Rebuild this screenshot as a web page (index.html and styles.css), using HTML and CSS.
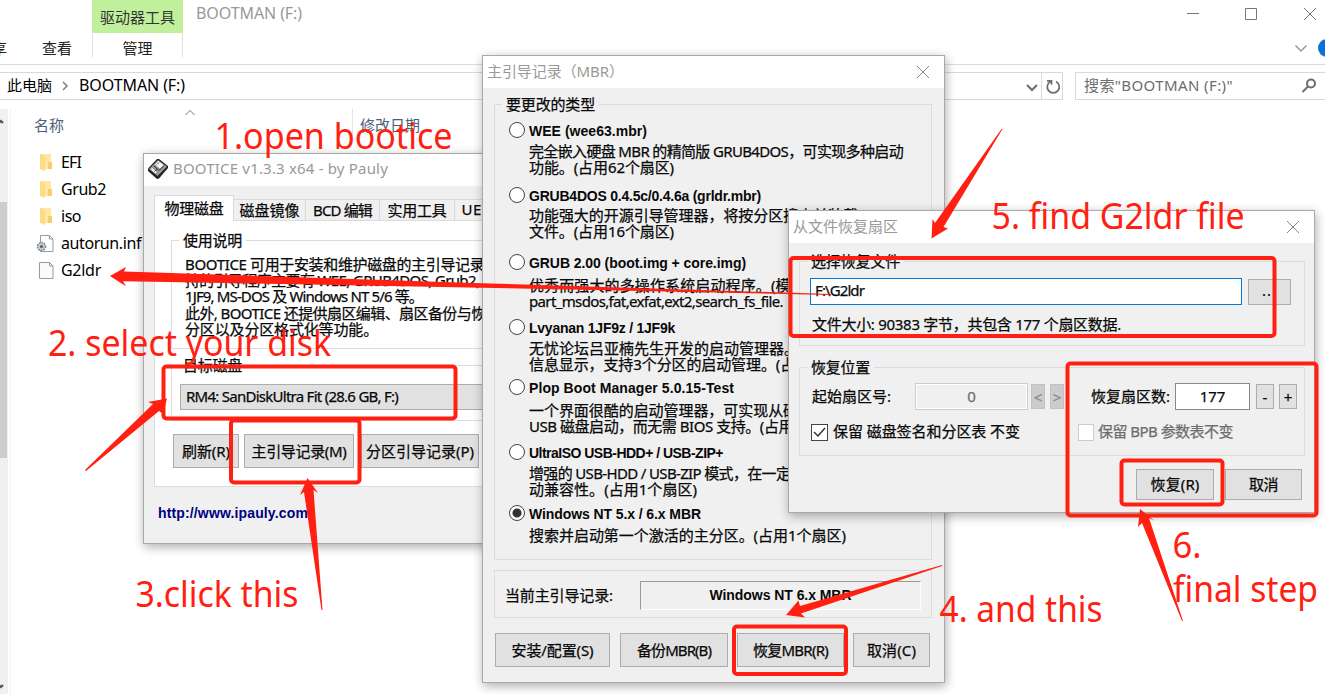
FILE: index.html
```
<!DOCTYPE html>
<html lang="zh-CN">
<head>
<meta charset="utf-8">
<title>BOOTMAN (F:)</title>
<link rel="stylesheet" href="styles.css">
</head>
<body>
<main class="desktop">
  <section class="explorer">
    <header class="ex-title">
      <span class="ex-tool"><span data-w="75">驱动器工具</span></span>
      <span class="ex-name"><span data-w="106">BOOTMAN (F:)</span></span>
      <svg class="ex-controls" width="140" height="28" viewBox="1185 0 140 28"><path d="M1187 13.500h12M1245.500 8.500h11v11h-11zM1304 8l12 12M1316 8l-12 12"/></svg>
    </header>
    <nav class="ex-ribbon">
      <span class="rb-share">享</span>
      <span class="rb-view">查看</span>
      <span class="rb-manage">管理</span>
      <svg class="rb-right" width="35" height="30" viewBox="1290 33 35 30"><path class="chev" d="M1295.500 45.500l5.500 5.500 5.500-5.500"/><circle cx="1327" cy="48" r="9" fill="#0873d2"/></svg>
    </nav>
    <div class="ex-bar">
      <div class="path">
        <span data-w="45">此电脑</span>
        <svg class="path-sep" width="8" height="10" viewBox="0 0 8 10"><path d="M2 1l4 4-4 4"/></svg>
        <span class="lat" data-w="106">BOOTMAN (F:)</span>
        <svg class="path-ctl" width="36" height="26" viewBox="1026 73 36 26"><path d="M1027 85l5 5 5-5" stroke-width="2"/><path d="M1041.500 72v28" stroke="#d9d9d9" stroke-width="1"/><path d="M1050.500 81.500a6 6 0 1 0 5.500 0M1047 80.800h4.500v4" stroke-width="1.700"/></svg>
      </div>
      <div class="search">
        <span data-w="149">搜索"BOOTMAN (F:)"</span>
        <svg width="16" height="16" viewBox="0 0 16 16"><circle cx="10" cy="5.500" r="4"/><path d="M7 8.500L1.500 14"/></svg>
      </div>
    </div>
    <div class="ex-main">
      <div class="scroll"><svg width="8" height="16" viewBox="0 0 8 16"><path d="M-2 15l3-3 2 2"/></svg><i></i><svg class="down" width="8" height="16" viewBox="0 0 8 16"><path d="M-2 6l3 3 2-2"/></svg></div>
      <div class="list">
        <div class="cols"><span class="c-name">名称</span><svg class="sort" width="12" height="8" viewBox="0 0 12 8"><path d="M1.500 6l4.500-4.500 4.500 4.500"/></svg><span class="c-date">修改日期</span></div>
        <div class="file"><svg width="20" height="20" viewBox="0 0 20 20"><path fill="#ffe7a2" d="M4 1h11v15H4z"/><path fill="#f6d06e" d="M12 9h4v7h-4z"/><path fill="#fbdc84" d="M4 1l5 3v14l-5-2z"/></svg><span data-w="20">EFI</span></div>
        <div class="file"><svg width="20" height="20" viewBox="0 0 20 20"><path fill="#ffe7a2" d="M4 1h11v15H4z"/><path fill="#f6d06e" d="M12 9h4v7h-4z"/><path fill="#fbdc84" d="M4 1l5 3v14l-5-2z"/></svg><span data-w="45">Grub2</span></div>
        <div class="file"><svg width="20" height="20" viewBox="0 0 20 20"><path fill="#ffe7a2" d="M4 1h11v15H4z"/><path fill="#f6d06e" d="M12 9h4v7h-4z"/><path fill="#fbdc84" d="M4 1l5 3v14l-5-2z"/></svg><span data-w="20">iso</span></div>
        <div class="file"><svg width="20" height="20" viewBox="0 0 20 20"><path fill="#fff" stroke="#9a9a9a" d="M4.500 1.500h9l3.500 3.500v12.500H4.500z"/><path fill="none" stroke="#9a9a9a" d="M13.500 1.500v3.500h3.500"/><circle cx="5.500" cy="12.500" r="4" fill="#c4ccd2" stroke="#7d8991" stroke-width="1.600" stroke-dasharray="1.600 1"/><circle cx="5.500" cy="12.500" r="1.500" fill="#4f5a61"/></svg><span data-w="80">autorun.inf</span></div>
        <div class="file"><svg width="20" height="20" viewBox="0 0 20 20"><path fill="#fafafa" stroke="#9a9a9a" d="M3.500 1.500h10l3.500 3.500v12.500H3.500z"/><path fill="none" stroke="#9a9a9a" d="M13.500 1.500v3.500h3.500"/></svg><span data-w="40">G2ldr</span></div>
      </div>
    </div>
  </section>

  <section class="window bootice">
    <header class="titlebar">
      <svg class="app" width="20" height="20" viewBox="0 0 20 20"><path fill="#222" d="M9 0L0 9.500v2.500L9 20l2-.5L20 9V7L11 0z"/><path fill="#999" d="M10 1L1 10l8.500 7L19 7.500z"/><path fill="#fff" d="M10.500 2L7 5.500l5 4L15.500 6zM4 9l4.500 4-1 1.500L3 10.500z"/><path stroke="#333" fill="none" d="M11 3.500L9 5.500M6 7l5 4.500 5-5M6.500 12.500l2.500-2.500"/></svg>
      <span data-w="215">BOOTICE v1.3.3 x64 - by Pauly</span>
    </header>
    <div class="bt-body">
      <div class="tabs"><span class="tab on"><span data-w="59">物理磁盘</span></span><span class="tab t2"><span data-w="60">磁盘镜像</span></span><span class="tab t3"><span data-w="59">BCD 编辑</span></span><span class="tab t4"><span data-w="59">实用工具</span></span><span class="tab t5"><span data-w="34">UEFI</span></span></div>
      <div class="page">
        <div class="group g-info">
          <div class="legend"><span data-w="59">使用说明</span></div>
          <p><span data-w="314">BOOTICE 可用于安装和维护磁盘的主引导记录、</span></p>
          <p><span data-w="313">持的引导程序主要有 WEE, GRUB4DOS, Grub2, SY</span></p>
          <p><span data-w="238">1JF9, MS-DOS 及 Windows NT 5/6 等。</span></p>
          <p><span data-w="315">此外, BOOTICE 还提供扇区编辑、扇区备份与恢复</span></p>
          <p><span data-w="193">分区以及分区格式化等功能。</span></p>
        </div>
        <div class="group g-disk">
          <div class="legend"><span data-w="59">目标磁盘</span></div>
          <div class="select"><span data-w="212">RM4: SanDiskUltra Fit (28.6 GB, F:)</span></div>
        </div>
        <div class="bt-buttons"><span class="btn b1"><span data-w="48">刷新(R)</span></span><span class="btn b2"><span data-w="95">主引导记录(M)</span></span><span class="btn b3"><span data-w="108">分区引导记录(P)</span></span></div>
      </div>
      <div class="url"><b data-w="150">http://www.ipauly.com</b></div>
    </div>
  </section>

  <section class="window mbr">
    <header class="titlebar"><span data-w="137">主引导记录（MBR）</span><svg width="14" height="14" viewBox="0 0 14 14"><path d="M1 1l12 12M13 1L1 13"/></svg></header>
    <div class="mbr-body">
      <div class="group types">
        <div class="legend"><span data-w="89">要更改的类型</span></div>
        <div class="options">
          <div class="opt"><i></i><b data-w="118">WEE (wee63.mbr)</b><p><span data-w="374">完全嵌入硬盘 MBR 的精简版 GRUB4DOS，可实现多种启动</span></p><p><span data-w="145">功能。(占用62个扇区)</span></p></div>
          <div class="opt d3"><i></i><b data-w="232">GRUB4DOS 0.4.5c/0.4.6a (grldr.mbr)</b><p><span data-w="329">功能强大的开源引导管理器，将按分区搜索并装载</span></p><p><span data-w="145">文件。(占用16个扇区)</span></p></div>
          <div class="opt d6"><i></i><b data-w="217">GRUB 2.00 (boot.img + core.img)</b><p><span data-w="281">优秀而强大的多操作系统启动程序。(模块:</span></p><p><span data-w="254">part_msdos,fat,exfat,ext2,search_fs_file.</span></p></div>
          <div class="opt"><i></i><b data-w="146">Lvyanan 1JF9z / 1JF9k</b><p><span data-w="270">无忧论坛吕亚楠先生开发的启动管理器。</span></p><p><span data-w="281">信息显示，支持3个分区的启动管理。(占用</span></p></div>
          <div class="opt d6"><i></i><b data-w="205">Plop Boot Manager 5.0.15-Test</b><p><span data-w="284">一个界面很酷的启动管理器，可实现从硬盘</span></p><p><span data-w="264">USB 磁盘启动，而无需 BIOS 支持。(占用</span></p></div>
          <div class="opt"><i></i><b data-w="194">UltraISO USB-HDD+ / USB-ZIP+</b><p><span data-w="290">增强的 USB-HDD / USB-ZIP 模式，在一定程度</span></p><p><span data-w="168">动兼容性。(占用1个扇区)</span></p></div>
          <div class="opt d5 sel"><i></i><b data-w="172">Windows NT 5.x / 6.x MBR</b><p><span data-w="317">搜索并启动第一个激活的主分区。(占用1个扇区)</span></p></div>
        </div>
      </div>
      <div class="current"><span data-w="108">当前主引导记录:</span><div class="sunken"><b data-w="142">Windows NT 6.x MBR</b></div></div>
      <div class="mbr-buttons"><span class="btn m1"><span data-w="82">安装/配置(S)</span></span><span class="btn m2"><span data-w="74">备份MBR(B)</span></span><span class="btn m3"><span data-w="75">恢复MBR(R)</span></span><span class="btn m4"><span data-w="49">取消(C)</span></span></div>
    </div>
  </section>

  <section class="window restore">
    <header class="titlebar"><span data-w="105">从文件恢复扇区</span><svg width="14" height="14" viewBox="0 0 14 14"><path d="M1 1l12 12M13 1L1 13"/></svg></header>
    <div class="rs-body">
      <div class="group rs-file">
        <div class="legend"><span data-w="89">选择恢复文件</span></div>
        <div class="row"><span class="input focus"><span data-w="49">F:\G2ldr</span></span><span class="btn more">...</span></div>
        <p class="size"><span data-w="309">文件大小: 90383 字节，共包含 177 个扇区数据.</span></p>
      </div>
      <div class="group rs-pos">
        <div class="legend"><span data-w="59">恢复位置</span></div>
        <div class="row nums"><span class="lab1"><span data-w="79">起始扇区号:</span></span><span class="input off">0</span><span class="btn step off">&lt;</span><span class="btn step off">&gt;</span><span class="lab2"><span data-w="79">恢复扇区数:</span></span><span class="input count">177</span><span class="btn pm">-</span><span class="btn pm">+</span></div>
        <div class="row checks"><span class="check"><svg width="17" height="17" viewBox="0 0 17 17"><path d="M3 8l4 4 7-8"/></svg></span><span class="ck1"><span data-w="187">保留 磁盘签名和分区表 不变</span></span><span class="check dis"></span><span class="ck2"><span data-w="135">保留 BPB 参数表不变</span></span></div>
      </div>
      <div class="rs-buttons"><span class="btn r1"><span data-w="49">恢复(R)</span></span><span class="btn r2"><span data-w="29">取消</span></span></div>
    </div>
  </section>

  <svg class="notes" width="1325" height="694" viewBox="0 0 1325 694">
    <g class="boxes">
      <rect x="163.500" y="366.500" width="292" height="52" rx="3"/>
      <rect x="231" y="420.500" width="128.500" height="62" rx="3"/>
      <rect x="734" y="626.500" width="112" height="47.500" rx="3"/>
      <rect x="790.500" y="258" width="484" height="78" rx="3"/>
      <rect x="1067.500" y="363.500" width="249" height="152" rx="3"/>
      <rect x="1121.500" y="460.500" width="101" height="44" rx="3"/>
    </g>
    <g class="arrows">
      <path d="M110 276l16-9-2 4.500L482 283.200 831 294v1L482 287.700 123 281.200l3 5z"/>
      <path d="M167 398.500l-19 3.500 5 2L85 470l1 1 73-60 4 3z"/>
      <path d="M307.500 478l-7.500 17 4-3 17.500 118h1L313.500 490l4.500 3z"/>
      <path d="M786 615l12.500-14.500 1.500 5.500L942 565v1L801 613.500l4 4z"/>
      <path d="M931.500 238.500l1-19.500 2.500 4L1001.500 129h1L943.500 227l4.500 1.500z"/>
      <path d="M1140 509l-2 18 4-4 40 98h1l-34-103 5 2.500z"/>
    </g>
    <g class="words">
      <text x="214.500" y="148.500" textLength="238" lengthAdjust="spacingAndGlyphs">1.open bootice</text>
      <text x="48" y="355.500" textLength="283" lengthAdjust="spacingAndGlyphs">2. select your disk</text>
      <text x="135.500" y="606.500" textLength="163" lengthAdjust="spacingAndGlyphs">3.click this</text>
      <text x="939.500" y="621.500" textLength="163" lengthAdjust="spacingAndGlyphs">4. and this</text>
      <text x="991.500" y="228.500" textLength="253" lengthAdjust="spacingAndGlyphs">5. find G2ldr file</text>
      <text x="1172.500" y="558" textLength="29" lengthAdjust="spacingAndGlyphs">6.</text>
      <text x="1173" y="601.500" textLength="145" lengthAdjust="spacingAndGlyphs">final step</text>
    </g>
  </svg>
</main>
<script src="fit.js"></script>
</body>
</html>
```
FILE: styles.css
```
* { box-sizing: border-box; }
body { margin: 0; background: #fff; font-family: "Noto Sans", "Noto Sans CJK SC", sans-serif; font-size: 15px; color: #000; }
p { margin: 0; }
svg { display: block; flex: none; }
[data-w] { display: inline-block; white-space: nowrap; }
span[data-w] { transform: translateY(-1px); }
.desktop { position: relative; width: 1325px; height: 694px; overflow: hidden; }

/* explorer */
.explorer { display: flex; flex-direction: column; height: 694px; }
.ex-title { display: flex; height: 33px; padding-left: 92px; line-height: 28px; }
.ex-tool { width: 91px; height: 33px; padding-left: 8px; background: #c0f09c; color: #333; line-height: 36px; }
.ex-name { margin-left: 13px; color: #999; font-size: 16px; }
.ex-controls { margin-left: auto; fill: none; stroke: #777; }
.ex-ribbon { display: flex; height: 32px; border-bottom: 1px solid #dcdcdc; line-height: 30px; color: #222; }
.rb-share { width: 42px; margin-left: -8px; margin-right: 8px; }
.rb-view { width: 50px; }
.rb-manage { width: 91px; height: 24px; text-align: center; border: solid #e0e0e0; border-width: 0 1px; }
.rb-right { margin-left: auto; }
.chev { fill: none; stroke: #999; stroke-width: 1.5; }
.ex-bar { display: flex; height: 28px; margin-top: 7px; line-height: 26px; }
.path { display: flex; align-items: center; width: 1063px; padding-left: 7px; border: 1px solid #d9d9d9; border-left: 0; }
.lat { font-size: 16px; }
.path-sep { margin: 0 10px 0 9px; fill: none; stroke: #777; stroke-width: 1.4; }
.path-ctl { margin-left: auto; fill: none; stroke: #6d6d6d; }
.search { display: flex; align-items: center; flex: 1; margin-left: 12px; padding: 0 8px; border: 1px solid #d9d9d9; border-right: 0; color: #6d6d6d; justify-content: space-between; }
.search svg { fill: none; stroke: #6d6d6d; stroke-width: 2; }
.ex-main { display: flex; flex: 1; padding-top: 9px; }
.scroll { display: flex; flex-direction: column; width: 8px; background: #f0f0f0; }
.scroll svg { fill: none; stroke: #555; stroke-width: 2; }
.scroll i { width: 7px; height: 256px; margin-top: 77px; background: #cdcdcd; }
.scroll .down { margin-top: auto; }
.list { flex: 1; margin-left: 2px; border-left: 1px solid #f2f2f2; }
.cols { display: flex; height: 40px; padding-left: 23px; line-height: 33px; color: #4c607a; }
.sort { fill: none; stroke: #777; }
.c-name { width: 150px; }
.c-date { height: 34px; margin-left: 156px; padding-left: 7px; border-left: 1px solid #e5e5e5; }
.file { display: flex; align-items: center; height: 27px; padding-left: 25px; font-size: 16px; }
.file span { margin-left: 5px; }

/* windows */
.window { position: absolute; border: 1px solid #a9a9a9; background: #f0f0f0; box-shadow: 1px 3px 10px rgba(0,0,0,.32); color: #080808; -webkit-text-stroke: .25px; }
.titlebar { display: flex; align-items: center; height: 32px; background: #fff; color: #999; padding: 0 14px 0 4px; -webkit-text-stroke: 0; }
.titlebar span { margin-bottom: 2px; }
.titlebar svg:not(.app) { margin-left: auto; fill: none; stroke: #858585; }
.group { border: 1px solid #dcdcdc; }
.legend { width: max-content; height: 16px; margin: -8px 0 0 7px; padding: 0 4px; line-height: 16px; background: #f0f0f0; }
.btn { display: flex; align-items: center; justify-content: center; background: #e1e1e1; border: 1px solid #adadad; }

.bootice { left: 143px; top: 153px; width: 500px; height: 391px; }
.app { margin-right: 5px; margin-bottom: 3px; }
.bt-body { padding: 9px 0 0 10px; }
.tabs { display: flex; align-items: flex-end; height: 25px; }
.tab { display: flex; align-items: center; justify-content: center; height: 21px; border: 1px solid #d9d9d9; border-width: 1px 1px 0 0; }
.tab.on { position: relative; width: 80px; height: 26px; margin-bottom: -1px; background: #fff; border-left-width: 1px; }
.t2 { width: 72px; } .t3 { width: 74px; } .t4 { width: 75px; } .t5 { width: 48px; }
.page { height: 267px; padding: 19px 0 0 16px; background: #fff; border: 1px solid #dcdcdc; }
.page .legend { background: #fff; }
.g-info { height: 109px; }
.g-info p { height: 16.2px; padding-left: 13px; line-height: 16.2px; }
.g-info .legend { margin-bottom: 8px; }
.g-disk { height: 56px; margin-top: 16px; }
.select { display: flex; align-items: center; height: 26px; margin: 10px 8px 0; padding-left: 5px; background: #e1e1e1; border: 1px solid #adadad; }
.bt-buttons { display: flex; height: 34px; margin: 13px 0 0 2px; }
.b1 { width: 66px; } .b2 { width: 110px; margin-left: 5px; } .b3 { width: 118px; margin-left: 7px; }
.url { margin: 17px 0 0 4px; font: bold 14px/18px "Liberation Sans", sans-serif; color: #000080; -webkit-text-stroke: 0; }

.mbr { left: 482px; top: 55px; width: 463px; height: 628px; }
.mbr-body { padding: 16px 12px 0 11px; }
.types { height: 456px; }
.options { display: grid; grid-template-rows: 65px 67px 65px 60px 65px 61px auto; padding: 9px 0 0 14px; }
.opt { display: grid; grid-template-columns: 16px auto; grid-template-rows: 18px; grid-auto-rows: 16.3px; align-content: start; column-gap: 4px; }
.opt i { width: 16px; height: 16px; border: 1.500px solid #444; border-radius: 50%; background: #fff; }
.opt b, .sunken b { font: bold 14px/19px "Liberation Sans", sans-serif; justify-self: start; -webkit-text-stroke: 0; }
.opt p { grid-column: 2; line-height: 16px; white-space: nowrap; transform: translateY(4px); }
.opt.d3 p { transform: translateY(3px); } .opt.d5 p { transform: translateY(5px); } .opt.d6 p { transform: translateY(6px); }
.sel i { background: radial-gradient(circle, #333 4px, #fff 5px); }
.current { display: flex; align-items: center; height: 48px; margin-top: 10px; padding: 2px 10px 0; border: 1px solid #dcdcdc; }
.sunken { display: flex; align-items: center; justify-content: center; width: 281px; height: 29px; margin-left: auto; border: 1px solid; border-color: #999 #fff #fff #999; }
.mbr-buttons { display: flex; height: 34px; margin: 15px 0 0 1px; }
.m1 { width: 115px; } .m2 { width: 108px; margin-left: 10px; } .m3 { width: 107px; margin-left: 9px; } .m4 { width: 77px; margin-left: 9px; }

.restore { left: 788px; top: 210px; width: 527px; height: 303px; }
.rs-body { padding: 18px 9px 0 10px; }
.row { display: flex; align-items: center; }
.rs-file { height: 85px; }
.rs-file .row { margin: 8px 0 0 10px; }
.input { display: flex; align-items: center; height: 27px; padding-bottom: 2px; background: #fff; border: 1px solid #888; justify-content: center; }
.input.focus { width: 432px; padding-left: 4px; border-color: #0078d7; justify-content: flex-start; }
.more { width: 43px; height: 26px; margin-left: 6px; padding-bottom: 4px; letter-spacing: 1px; }
.size { margin: 12px 0 0 12px; line-height: 16px; }
.rs-pos { height: 89px; margin-top: 21px; }
.nums { margin: 7px 0 0 12px; }
.lab1 { width: 103px; }
.input.off { width: 113px; background: #f0f0f0; border-color: #ccc; box-shadow: inset 0 0 0 1px #fff; color: #6d6d6d; margin-right: 3px; }
.step { width: 14px; height: 25px; margin-right: 5px; }
.step.off { background: #ccc; border-color: #c2c2c2; color: #888; }
.lab2 { margin-left: 22px; width: 84px; }
.count { width: 75px; }
.pm { width: 18px; height: 25px; margin-left: 6px; }
.pm + .pm { margin-left: 5px; }
.checks { margin: 14px 0 0 11px; height: 17px; line-height: 17px; }
.check { width: 17px; height: 17px; border: 1px solid #444; background: #fff; }
.check svg { margin: -1px; fill: none; stroke: #333; stroke-width: 1.5; }
.ck1 { width: 245px; padding-left: 5px; margin-right: 5px; }
.check.dis { border-color: #ccc; width: 16px; }
.ck2 { margin-left: 4px; color: #6d6d6d; }
.rs-buttons { display: flex; justify-content: flex-end; height: 31px; margin: 13px 3px 0 0; }
.r1 { width: 78px; } .r2 { width: 77px; margin-left: 11px; }

/* annotations */
.notes { position: absolute; left: 0; top: 0; }
.boxes rect { fill: none; stroke: #ff2011; stroke-width: 4; }
.arrows path { fill: #ff2011; }
.words text { font-size: 35.500px; fill: #ff2011; }
```
FILE: fit.js
```
// Space each label so that its text fills the width given in data-w.
document.querySelectorAll('[data-w]').forEach(function (el) {
  var n = Array.from(el.textContent).length;
  var gap = (Number(el.dataset.w) - el.getBoundingClientRect().width) / n;
  el.style.letterSpacing = gap.toFixed(3) + 'px';
});
```
